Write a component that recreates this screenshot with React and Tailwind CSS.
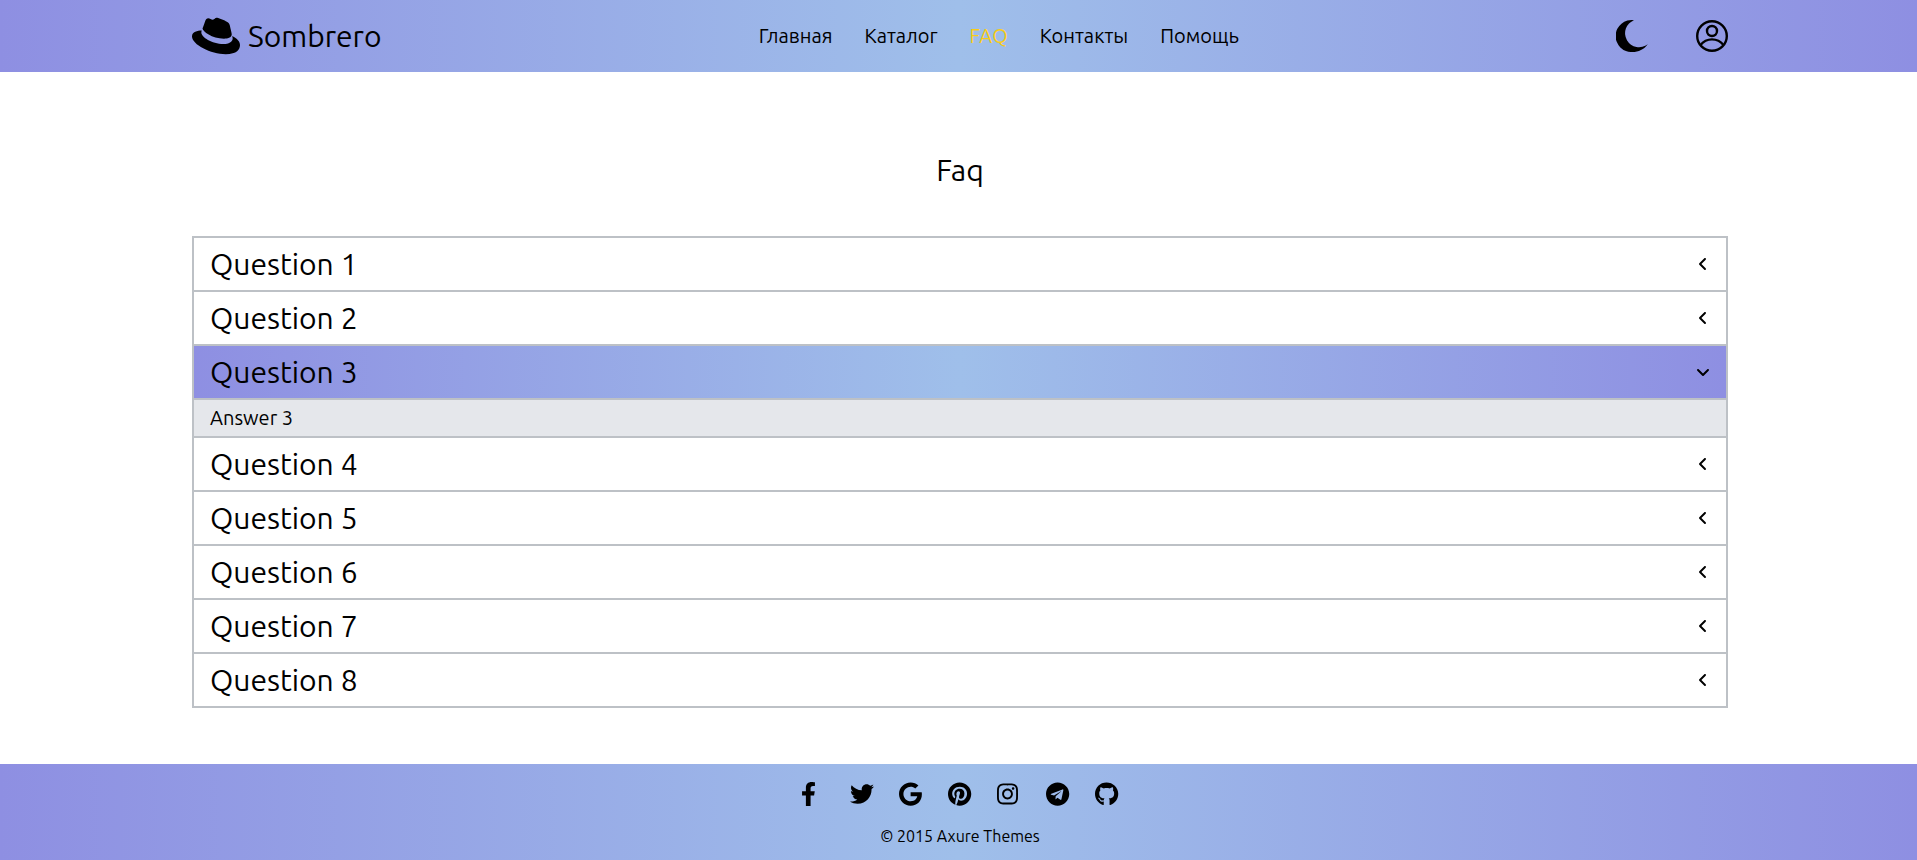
import { useState } from "react";
import {
  FaFacebookF,
  FaGithub,
  FaGoogle,
  FaInstagram,
  FaPinterest,
  FaRedhat,
  FaTelegram,
  FaTwitter,
} from "react-icons/fa";
import { FaAngleDown } from "react-icons/fa6";

const bar = "bg-[linear-gradient(90deg,#8e8fe2,#9fbfea,#8e8fe2)]";
const gutter = "pl-48 pr-[189px]";

const links = ["Главная", "Каталог", "FAQ", "Контакты", "Помощь"];

const socials = [
  { name: "Facebook", Icon: FaFacebookF },
  { name: "Twitter", Icon: FaTwitter },
  { name: "Google", Icon: FaGoogle },
  { name: "Pinterest", Icon: FaPinterest },
  { name: "Instagram", Icon: FaInstagram },
  { name: "Telegram", Icon: FaTelegram },
  { name: "GitHub", Icon: FaGithub },
];

const items = [1, 2, 3, 4, 5, 6, 7, 8];

function Moon() {
  return (
    <svg viewBox="0 0 32 32" className="size-8" fill="currentColor" aria-hidden="true">
      <path d="M18 .2A16 16 0 1 0 16.5 32C22.5 32 28 29.4 31.8 24.2A14 14 0 1 1 18 .2Z" />
    </svg>
  );
}

function Profile() {
  return (
    <svg
      viewBox="0 0 32 32"
      className="size-8"
      fill="none"
      stroke="currentColor"
      strokeWidth="2.4"
      aria-hidden="true"
    >
      <circle cx="16" cy="16" r="14.8" />
      <circle cx="16" cy="11" r="5" />
      <path d="M4.3 25.3C7.3 21.6 11.4 19.4 16 19.4S24.7 21.6 27.7 25.3" />
    </svg>
  );
}

function Header() {
  return (
    <header className={`flex h-18 items-center justify-between ${gutter} ${bar}`}>
      <a href="#" className="flex items-center gap-2 text-3xl">
        <FaRedhat className="size-12" />
        <span>Sombrero</span>
      </a>
      <nav className="flex gap-8 text-xl">
        {links.map((label) => (
          <a key={label} href="#" className={label === "FAQ" ? "text-[#facc15]" : ""}>
            {label}
          </a>
        ))}
      </nav>
      <div className="flex items-center gap-12">
        <button type="button" aria-label="Тёмная тема">
          <Moon />
        </button>
        <button type="button" aria-label="Профиль">
          <Profile />
        </button>
      </div>
    </header>
  );
}

function Faq() {
  const [open, setOpen] = useState(3);
  return (
    <main className={`grow pt-20 pb-14 ${gutter}`}>
      <h1 className="mb-12 text-center text-3xl">Faq</h1>
      <div className="divide-y-2 divide-[#bdc1c6] border-2 border-[#bdc1c6]">
        {items.map((n) => {
          const active = open === n;
          return (
            <div key={n} className="divide-y-2 divide-[#bdc1c6]">
              <button
                type="button"
                aria-expanded={active}
                onClick={() => setOpen(active ? 0 : n)}
                className={`flex w-full items-center justify-between px-4 py-2 text-3xl ${active ? bar : ""}`}
              >
                <span>Question {n}</span>
                <FaAngleDown className={`h-4 w-3.5 ${active ? "" : "rotate-90"}`} />
              </button>
              {active && <p className="bg-[#e5e7eb] px-4 py-1 text-xl">Answer {n}</p>}
            </div>
          );
        })}
      </div>
    </main>
  );
}

function Footer() {
  return (
    <footer className={`flex h-24 flex-col items-center justify-between pt-[18px] pb-3 ${gutter} ${bar}`}>
      <div className="flex gap-6">
        {socials.map(({ name, Icon }) => (
          <a key={name} href="#" aria-label={name} className="w-[25px]">
            <Icon className="h-6 w-full" preserveAspectRatio="xMinYMid" />
          </a>
        ))}
      </div>
      <p>© 2015 Axure Themes</p>
    </footer>
  );
}

export default function App() {
  return (
    <div className="flex min-h-screen flex-col bg-white font-['Ubuntu','Noto_Sans',sans-serif] text-black">
      <Header />
      <Faq />
      <Footer />
    </div>
  );
}
